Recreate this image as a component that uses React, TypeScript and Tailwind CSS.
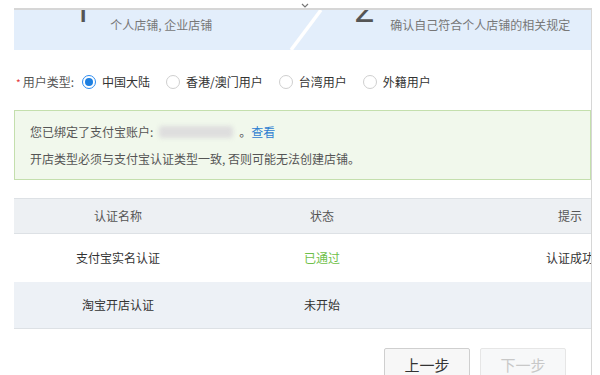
import React from 'react';

const font = { fontFamily: '"Noto Sans CJK SC", "Noto Sans", sans-serif' };

function Radio({ checked, label }: { checked?: boolean; label: string }) {
  return (
    <label className="flex items-center gap-[6px]">
      {checked ? (
        <span className="w-[14px] h-[14px] rounded-full border border-[#2d8cf0] flex items-center justify-center bg-white">
          <span className="w-[8px] h-[8px] rounded-full bg-[#1e7fe0]" />
        </span>
      ) : (
        <span className="w-[14px] h-[14px] rounded-full border border-[#cfcfcf] bg-white" />
      )}
      <span>{label}</span>
    </label>
  );
}

export default function App() {
  return (
    <div className="w-[600px] h-[375px] overflow-hidden bg-white text-[#333] relative" style={font}>
      {/* little arrow above the frame */}
      <svg className="absolute left-[301px] top-[3px]" width="8" height="5" viewBox="0 0 8 5">
        <path d="M1 1 L4 4 L7 1" stroke="#777" strokeWidth="1.2" fill="none" />
      </svg>

      <div className="ml-[14px] mt-[8px] w-[578px] h-[400px] border-t-2 border-r border-[#d6d6d6] overflow-hidden">
        {/* steps banner */}
        <div className="relative h-[40px] bg-[#e3eefb] overflow-hidden flex">
          <div className="w-[280px] flex items-start pl-[58px] gap-[18px]">
            <span className="font-['Roboto',sans-serif] text-[36px] leading-none -mt-[18px] text-[#555]">1</span>
            <span className="text-[12px] text-[#777] mt-[6px]">个人店铺, 企业店铺</span>
          </div>
          <div className="flex items-start pl-[60px] gap-[16px]">
            <span className="font-['Roboto',sans-serif] text-[36px] leading-none -mt-[18px] text-[#555]">2</span>
            <span className="text-[12px] text-[#777] mt-[6px]">确认自己符合个人店铺的相关规定</span>
          </div>
          <svg className="absolute left-0 top-0" width="578" height="40" viewBox="0 0 578 40">
            <line x1="307" y1="0" x2="277" y2="40" stroke="#fff" strokeWidth="3.5" />
          </svg>
        </div>

        {/* user type radios */}
        <div className="mt-[20px] h-[24px] flex items-center text-[12px] pl-[2px]">
          <span className="text-[#e4393c] text-[10px] mr-[2px]">*</span>
          <span className="text-[#555] mr-[8px]">用户类型:</span>
          <div className="flex items-center gap-[16px]">
            <Radio checked label="中国大陆" />
            <Radio label="香港/澳门用户" />
            <Radio label="台湾用户" />
            <Radio label="外籍用户" />
          </div>
        </div>

        {/* alipay notice */}
        <div className="mt-[16px] h-[70px] border border-[#c4dfad] bg-[#f1f8ec] px-[15px] pt-[12px] text-[12px] text-[#555]">
          <div className="flex items-center h-[18px]">
            <span>您已绑定了支付宝账户:</span>
            <span className="ml-[6px] w-[74px] h-[12px] rounded-[3px] bg-[#dedede] blur-[2px]" />
            <span className="ml-[6px]">。</span>
            <span className="text-[#2f80d1]">查看</span>
          </div>
          <div className="mt-[9px] h-[18px]">开店类型必须与支付宝认证类型一致, 否则可能无法创建店铺。</div>
        </div>

        {/* auth table */}
        <div className="mt-[18px] w-[704px] text-[12px]">
          <div className="grid grid-cols-[208px_200px_296px] h-[36px] items-center bg-[#edf0f3] border-y border-[#dde1e5] text-[#555] text-center">
            <span>认证名称</span>
            <span>状态</span>
            <span>提示</span>
          </div>
          <div className="grid grid-cols-[208px_200px_296px] h-[48px] items-center bg-white text-center">
            <span>支付宝实名认证</span>
            <span className="text-[#6fbf4a]">已通过</span>
            <span>认证成功</span>
          </div>
          <div className="grid grid-cols-[208px_200px_296px] h-[47px] items-center bg-[#edf1f6] border-b border-[#dde1e5] text-center">
            <span>淘宝开店认证</span>
            <span>未开始</span>
            <span />
          </div>
        </div>

        {/* step buttons */}
        <div className="mt-[19px] flex gap-[10px] pl-[370px]">
          <button className="w-[86px] h-[34px] border border-[#cfcfcf] rounded-[2px] bg-[#f7f7f7] text-[15px] text-[#333]">上一步</button>
          <button className="w-[86px] h-[34px] border border-[#e6e6e6] rounded-[2px] bg-[#f7f8f9] text-[15px] text-[#c8c8c8]" disabled>下一步</button>
        </div>
      </div>
    </div>
  );
}
